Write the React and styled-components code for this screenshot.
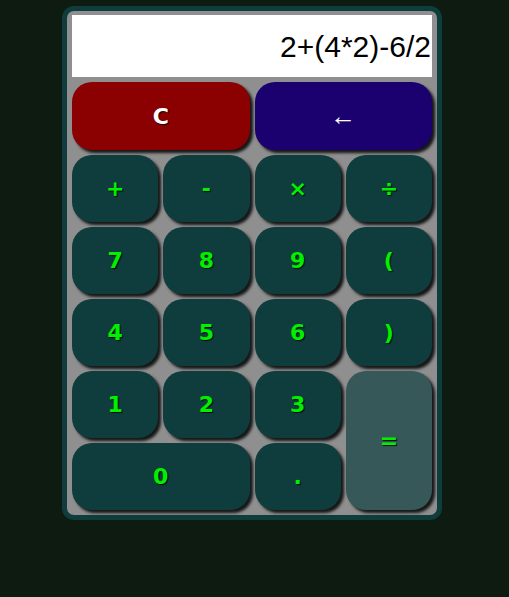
import React from "react";
import styled, { createGlobalStyle } from "styled-components";

const Global = createGlobalStyle`
  html, body { margin: 0; padding: 0; background: #0d1b11; }
  body { font-family: "Liberation Sans", Arial, sans-serif; }
`;

const Page = styled.div`
  display: flex;
  justify-content: center;
  align-items: flex-start;
  padding: 6px 5px 0 0;
  min-height: 597px;
  box-sizing: border-box;
`;

const Calculator = styled.div`
  width: 380px;
  box-sizing: border-box;
  border: 5px solid #0f3d3d;
  border-radius: 12px;
  background: #8f8f8f;
  padding: 4px 5px 5px 5px;
  display: flex;
  flex-direction: column;
  gap: 5px;
`;

const Display = styled.div`
  height: 62px;
  background: #fff;
  color: #000;
  font-family: "Liberation Sans", Arial, sans-serif;
  font-size: 30px;
  display: flex;
  align-items: center;
  justify-content: flex-end;
  padding-right: 1px;
  padding-top: 2px;
  box-sizing: border-box;
`;

const Keys = styled.div`
  display: grid;
  grid-template-columns: repeat(4, 1fr);
  grid-template-rows: 68px repeat(5, 67px);
  gap: 5px;
`;

const tones = {
  num: { bg: "#0f3d3d", fg: "#00f000" },
  eq: { bg: "#365858", fg: "#00f000" },
  clear: { bg: "#8b0000", fg: "#ffffff" },
  back: { bg: "#1b0070", fg: "#ffffff" },
};

const Key = styled.button`
  border: none;
  border-radius: 20px;
  background: ${(p) => tones[p.$tone || "num"].bg};
  color: ${(p) => tones[p.$tone || "num"].fg};
  font-family: "DejaVu Sans", Verdana, sans-serif;
  font-weight: bold;
  font-size: 22px;
  text-shadow: 1px 1px 1px rgba(0, 0, 0, 0.85);
  box-shadow: 3px 3px 3px rgba(0, 0, 0, 0.85);
  grid-column: span ${(p) => p.$cols || 1};
  grid-row: span ${(p) => p.$rows || 1};
  padding: 0;
  cursor: pointer;
`;

const BackKey = styled(Key)`
  font-family: "Liberation Sans", Arial, sans-serif;
  font-weight: normal;
  font-size: 26px;
  text-shadow: none;
`;

export default function App() {
  return (
    <>
      <Global />
      <Page>
        <Calculator>
          <Display>2+(4*2)-6/2</Display>
          <Keys>
            <Key $tone="clear" $cols={2}>C</Key>
            <BackKey $tone="back" $cols={2}>←</BackKey>
            <Key>+</Key>
            <Key>-</Key>
            <Key>×</Key>
            <Key>÷</Key>
            <Key>7</Key>
            <Key>8</Key>
            <Key>9</Key>
            <Key>(</Key>
            <Key>4</Key>
            <Key>5</Key>
            <Key>6</Key>
            <Key>)</Key>
            <Key>1</Key>
            <Key>2</Key>
            <Key>3</Key>
            <Key $tone="eq" $rows={2}>=</Key>
            <Key $cols={2}>0</Key>
            <Key>.</Key>
          </Keys>
        </Calculator>
      </Page>
    </>
  );
}
